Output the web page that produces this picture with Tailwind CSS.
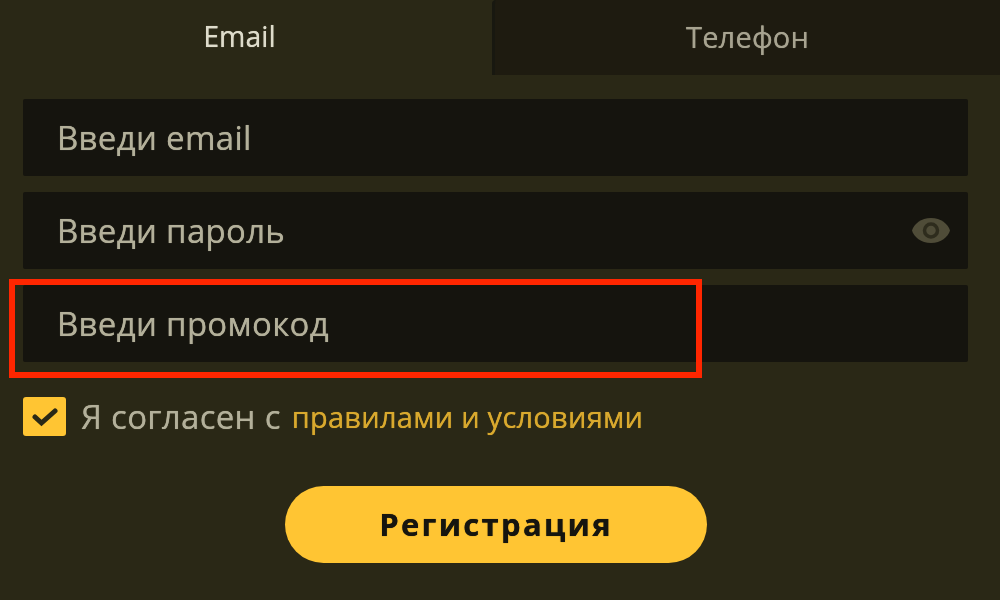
<!DOCTYPE html>
<html lang="ru">
<head>
<meta charset="utf-8">
<script src="https://cdn.jsdelivr.net/npm/@tailwindcss/browser@4"></script>
</head>
<body class="m-0 bg-[#2a2816]">
<div class="relative w-[1000px] h-[600px] overflow-hidden bg-[#2a2816] font-['Open_Sans',sans-serif] [text-shadow:0_0_0.7px_currentColor] blur-[0.6px]">
  <div class="flex h-[75px]">
    <div class="w-[492px] flex items-center justify-center pr-[13px] pb-[2px] text-[28.5px] text-[#dedccb]">Email</div>
    <div class="flex-1 flex items-center justify-center pb-[2px] text-[29px] tracking-[0.2px] text-[#a7a390] bg-[#1e1b10] border-l-[3px] border-[#181810] rounded-tl-[4px]">Телефон</div>
  </div>
  <div class="flex flex-col gap-[16px] px-[23px] mt-[24px] mr-[9px]">
    <div class="h-[77px] rounded-[2px] bg-[#15140e] flex items-center pl-[34px] text-[33px] tracking-[0.3px] text-[#b3b09a]">Введи email</div>
    <div class="h-[77px] rounded-[2px] bg-[#15140e] flex items-center justify-between pl-[34px] pr-[18px] text-[33px] tracking-[0.3px] text-[#b3b09a]">
      <span>Введи пароль</span>
      <svg class="w-[38px] h-[25px]" viewBox="0 0 38 25"><path fill="#4f4c38" d="M19 0C29 0 36 6 38 12.500C36 19 29 25 19 25C9 25 2 19 0 12.500C2 6 9 0 19 0Z"/><circle cx="19" cy="12.500" r="6.500" fill="none" stroke="#2e2c1d" stroke-width="3.500"/></svg>
    </div>
    <div class="h-[77px] rounded-[2px] bg-[#15140e] flex items-center pl-[34px] text-[33px] tracking-[0.3px] text-[#b3b09a]">Введи промокод</div>
  </div>
  <div class="flex items-center mt-[35px] ml-[23px] h-[39px]">
    <div class="w-[43px] h-[39px] rounded-[3px] bg-[#ffc533] flex items-center justify-center">
      <svg class="w-[26px] h-[20px]" viewBox="0 0 26 20"><path d="M3 10L9.500 16L23 4" fill="none" stroke="#2a2816" stroke-width="5" stroke-linecap="round"/></svg>
    </div>
    <span class="ml-[15px] text-[33px] tracking-[0.3px] text-[#b3b09a]">Я согласен с</span>
    <span class="ml-[11px] text-[29px] tracking-[0.25px] text-[#d9a92e]">правилами и условиями</span>
  </div>
  <div class="mt-[50px] ml-[285px] w-[422px] h-[77px] rounded-full bg-[#ffc533] flex items-center justify-center text-[31px] font-bold tracking-[2.300px] text-[#16150f]">Регистрация</div>
  <div class="absolute left-[9px] top-[279px] w-[693px] h-[99px] border-[6px] border-[#ff2600]"></div>
</div>
</body>
</html>
